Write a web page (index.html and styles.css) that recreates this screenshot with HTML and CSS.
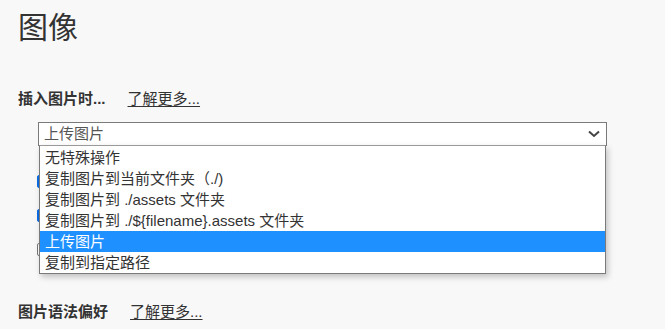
FILE: index.html
```html
<!DOCTYPE html>
<html lang="zh-CN">
<head>
<meta charset="utf-8">
<title>图像</title>
<link rel="stylesheet" href="styles.css">
</head>
<body>
<main class="page">
  <h1 class="title">图像</h1>

  <section class="group">
    <div class="group-head">
      <span class="group-label">插入图片时...</span>
      <a class="more" href="#">了解更多...</a>
    </div>

    <div class="field">
      <div class="select">
        <span class="select-value">上传图片</span>
        <svg class="chevron" width="12" height="8" viewBox="0 0 12 8" aria-hidden="true">
          <path d="M1 1.5 L6 6 L11 1.5" fill="none" stroke="#444" stroke-width="2"/>
        </svg>
      </div>
      <ul class="listbox">
        <li class="option">无特殊操作</li>
        <li class="option">复制图片到当前文件夹（./)</li>
        <li class="option">复制图片到 ./assets 文件夹</li>
        <li class="option">复制图片到 ./${filename}.assets 文件夹</li>
        <li class="option selected">上传图片</li>
        <li class="option">复制到指定路径</li>
      </ul>
    </div>

    <div class="checks">
      <div class="check-row"><span class="box checked"></span></div>
      <div class="check-row"><span class="box checked"></span></div>
      <div class="check-row"><span class="box"></span></div>
    </div>
  </section>

  <section class="group group-next">
    <div class="group-head">
      <span class="group-label">图片语法偏好</span>
      <a class="more" href="#">了解更多...</a>
    </div>
  </section>
</main>
</body>
</html>
```

FILE: styles.css
```css
html, body {
  margin: 0;
  padding: 0;
  background: #f8f8f8;
}

body {
  font-family: "Liberation Sans", "Noto Sans CJK SC", sans-serif;
  color: #333;
  overflow: hidden;
}

.page {
  padding: 0 18px;
}

.title {
  margin: 0;
  padding-top: 7px;
  font-size: 30px;
  line-height: 42px;
  font-weight: 400;
  color: #333;
}

.group {
  margin-top: 38px;
}

.group-next {
  margin-top: 44px;
}

.group-head {
  display: flex;
  align-items: baseline;
  gap: 22px;
  height: 24px;
  line-height: 24px;
}

.group-label {
  font-size: 15px;
  font-weight: 700;
  color: #333;
}

.more {
  font-size: 15px;
  color: #333;
  text-decoration: underline;
  text-underline-offset: 2px;
}

.field {
  position: relative;
  margin: 11px 0 0 20px;
  width: 569px;
}

.select {
  box-sizing: border-box;
  height: 24px;
  border: 1px solid #7a7a7a;
  background: #fff;
  display: flex;
  align-items: center;
  justify-content: space-between;
  padding: 0 6px 0 5px;
}

.select-value {
  font-size: 15px;
  color: #555;
  line-height: 20px;
}

.chevron {
  display: block;
}

.listbox {
  position: absolute;
  top: 23px;
  left: 1px;
  right: 1px;
  margin: 0;
  padding: 1px 0 0;
  list-style: none;
  background: #fff;
  border: 1px solid #7a7a7a;
  border-top-color: #9a9a9a;
  box-shadow: 2px 3px 6px rgba(0, 0, 0, 0.22);
  z-index: 2;
}

.option {
  height: 21px;
  line-height: 21px;
  padding-left: 5px;
  font-size: 15px;
  color: #333;
  white-space: nowrap;
}

.option.selected {
  background: #1e90ff;
  color: #fff;
}

.checks {
  margin: 28px 0 0 19px;
  display: flex;
  flex-direction: column;
  gap: 20px;
}

.check-row {
  display: flex;
  align-items: center;
  height: 14px;
}

.box {
  box-sizing: border-box;
  width: 13px;
  height: 13px;
  border: 1px solid #777;
  border-radius: 2px;
  background: #fff;
}

.box.checked {
  background: #0b6ee6;
  border-color: #0b6ee6;
}
```
